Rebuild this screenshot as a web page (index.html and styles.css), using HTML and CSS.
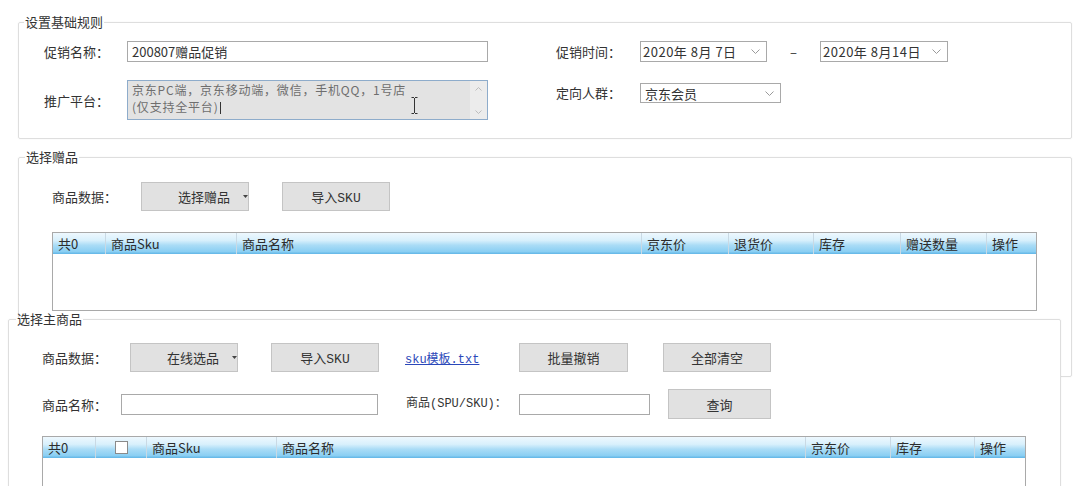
FILE: index.html
```html
<!DOCTYPE html>
<html lang="zh-CN">
<head>
    <meta charset="UTF-8">
    <meta name="viewport" content="width=device-width, initial-scale=1.0">
    <title>赠品促销</title>

    <link rel="stylesheet" href="styles.css">
</head>
<body>

    <fieldset class="group group-rules">
        <legend>设置基础规则</legend>
        <div class="rules">
            <label class="label">促销名称：</label>
            <div class="textbox name-box">200807赠品促销</div>

            <label class="label">促销时间：</label>
            <div class="date-range">
                <div class="picker date-picker">
                    <span class="date-text">2020年 8月 7日</span>
                    <svg class="chevron" width="9" height="5" viewBox="0 0 9 5"><path d="M0.5 0.5 L4.5 4.5 L8.5 0.5" fill="none" stroke="#9a9a9a" stroke-width="1"/></svg>
                </div>
                <span class="dash">–</span>
                <div class="picker date-picker">
                    <span class="date-text">2020年 8月14日</span>
                    <svg class="chevron" width="9" height="5" viewBox="0 0 9 5"><path d="M0.5 0.5 L4.5 4.5 L8.5 0.5" fill="none" stroke="#9a9a9a" stroke-width="1"/></svg>
                </div>
            </div>

            <label class="label">推广平台：</label>
            <div class="memo">
                <div class="memo-text">京东PC端，京东移动端，微信，手机QQ，1号店<br>(仅支持全平台)<span class="caret"></span></div>
                <div class="memo-scroll">
                    <svg width="7" height="4" viewBox="0 0 7 4"><path d="M0.5 3.5 L3.5 0.5 L6.5 3.5" fill="none" stroke="#bdbdbd"/></svg>
                    <svg width="7" height="4" viewBox="0 0 7 4"><path d="M0.5 0.5 L3.5 3.5 L6.5 0.5" fill="none" stroke="#bdbdbd"/></svg>
                </div>
                <!-- mouse pointer caught in the screenshot -->
                <svg class="ibeam" width="7" height="17" viewBox="0 0 7 17"><path d="M0.5 0.5 H3 M4 0.5 H6.5 M3.5 1 V16 M0.5 16.5 H3 M4 16.5 H6.5" fill="none" stroke="#333" stroke-width="1"/></svg>
            </div>

            <label class="label label-crowd">定向人群：</label>
            <div class="picker crowd-picker">
                <span>京东会员</span>
                <svg class="chevron" width="9" height="5" viewBox="0 0 9 5"><path d="M0.5 0.5 L4.5 4.5 L8.5 0.5" fill="none" stroke="#9a9a9a" stroke-width="1"/></svg>
            </div>
        </div>
    </fieldset>

    <fieldset class="group group-gift">
        <legend>选择赠品</legend>
        <div class="gift-body">
            <div class="toolbar">
                <span class="label gift-label">商品数据：</span>
                <div class="btn btn-drop">选择赠品
                    <svg width="5" height="3" viewBox="0 0 5 3"><path d="M0 0 H5 L2.5 3 Z" fill="#444"/></svg>
                </div>
                <div class="btn mono gift-import">导入SKU</div>
            </div>

            <div class="grid-table gift-table">
                <div class="grid-head">
                    <span>共0</span>
                    <span>商品Sku</span>
                    <span>商品名称</span>
                    <span>京东价</span>
                    <span>退货价</span>
                    <span>库存</span>
                    <span>赠送数量</span>
                    <span>操作</span>
                </div>
                <div class="grid-body"></div>
            </div>
        </div>
    </fieldset>

    <fieldset class="group group-main">
        <legend>选择主商品</legend>
        <div class="main-body">
            <div class="toolbar">
                <span class="label main-label">商品数据：</span>
                <div class="btn btn-drop">在线选品
                    <svg width="5" height="3" viewBox="0 0 5 3"><path d="M0 0 H5 L2.5 3 Z" fill="#444"/></svg>
                </div>
                <div class="btn mono main-import">导入SKU</div>
                <a class="link" href="#">sku模板.txt</a>
                <div class="btn btn-revoke">批量撤销</div>
                <div class="btn btn-clear">全部清空</div>
            </div>

            <div class="search-row">
                <span class="label name-label">商品名称：</span>
                <div class="textbox search-name"></div>
                <span class="label mono spu-label">商品(SPU/SKU)：</span>
                <div class="textbox search-spu"></div>
                <div class="btn btn-query">查询</div>
            </div>

            <div class="grid-table main-table">
                <div class="grid-head">
                    <span>共0</span>
                    <span class="check-cell"><i class="check"></i></span>
                    <span>商品Sku</span>
                    <span>商品名称</span>
                    <span>京东价</span>
                    <span>库存</span>
                    <span>操作</span>
                </div>
                <div class="grid-body"></div>
            </div>
        </div>
    </fieldset>

</body>
</html>
```

FILE: styles.css
```css
html, body {
    margin: 0;
    padding: 0;
    overflow: hidden;
    background-color: #fff;
}

body {
    width: 1080px;
    height: 486px;
    font-family: "Noto Sans CJK SC", "Noto Sans", sans-serif;
    font-size: 13px;
    color: #333;
}

.mono {
    font-family: "Liberation Mono", "Noto Sans CJK SC", monospace;
}

/* group boxes */
.group {
    border: 1px solid #dedede;
    border-radius: 2px;
    box-shadow: 0 0 2px rgba(0, 0, 0, 0.06);
    padding: 0;
    min-width: 0;
    background-color: #fff;
}

.group legend {
    font-size: 13px;
    line-height: 16px;
    padding: 0 1px;
    color: #333;
}

.group-rules {
    margin: 14px 8px 0 18px;
}

.group-rules legend {
    margin-left: 5px;
}

.group-gift {
    margin: 10px 8px 0 18px;
}

.group-gift legend {
    margin-left: 6px;
}

.group-main {
    position: relative; /* drawn over the gift box */
    margin: -66px 19px 0 8px;
}

.group-main legend {
    margin-left: 7px;
}

.label {
    white-space: nowrap;
    line-height: 21px;
}

/* base rules */
.rules {
    display: grid;
    grid-template-columns: 83px 429px 84px 1fr;
    grid-template-rows: 21px 40px;
    row-gap: 18px;
    align-items: center;
    padding: 11px 0 18px 25px;
}

.textbox {
    box-sizing: border-box;
    height: 21px;
    border: 1px solid #a9a9a9;
    background-color: #fff;
    padding: 0 4px;
    line-height: 19px;
    white-space: nowrap;
}

.name-box {
    width: 361px;
}

.date-range {
    display: flex;
    align-items: center;
}

.picker {
    box-sizing: border-box;
    display: flex;
    align-items: center;
    justify-content: space-between;
    height: 21px;
    border: 1px solid #a9a9a9;
    background-color: #fff;
    padding: 0 6px 0 2px;
    line-height: 19px;
    white-space: nowrap;
}

.date-picker {
    width: 127px;
}

.date-text {
    letter-spacing: 0.5px;
}

.date-range .date-picker:last-child {
    width: 128px;
}

.dash {
    width: 53px;
    text-align: center;
}

.memo {
    position: relative;
    box-sizing: border-box;
    display: flex;
    width: 361px;
    height: 40px;
    border: 1px solid #8eaccb;
    background-color: #e3e3e3;
}

.memo-text {
    flex: 1;
    padding: 0 4px;
    font-size: 12px;
    line-height: 17px;
    letter-spacing: 0.8px;
    color: #6e6e6e;
    white-space: nowrap;
}

.caret {
    display: inline-block;
    width: 1px;
    height: 12px;
    margin-left: 1px;
    background-color: #333;
    vertical-align: -2px;
}

.memo-scroll {
    width: 17px;
    display: flex;
    flex-direction: column;
    align-items: center;
    justify-content: space-between;
    padding: 6px 0 5px;
    background-color: #ececec;
}

.ibeam {
    position: absolute;
    left: 283px;
    top: 16px;
}

.label-crowd,
.crowd-picker {
    align-self: start;
    margin-top: 3px;
}

.label-crowd {
    line-height: 20px;
}

.crowd-picker {
    width: 141px;
    height: 20px;
    padding-left: 4px;
}

/* buttons */
.btn {
    box-sizing: border-box;
    display: flex;
    align-items: center;
    justify-content: center;
    width: 108px;
    height: 29px;
    border: 1px solid #c4c4c4;
    background-color: #e1e1e1;
    white-space: nowrap;
}

.btn-drop {
    justify-content: flex-start;
    padding-left: 36px;
    gap: 13px;
}

.toolbar {
    display: flex;
    align-items: center;
    height: 29px;
}

/* gift box */
.gift-body {
    padding: 17px 34px 65px 33px;
}

.gift-label {
    width: 89px;
}

.gift-import {
    margin-left: 33px;
}

/* tables */
.grid-table {
    box-sizing: border-box;
    margin-top: 21px;
    border: 1px solid #a9a9a9;
    background-color: #fff;
}

.grid-head {
    display: grid;
    height: 21px;
    background: linear-gradient(to bottom, #eef8fe 0%, #d8f0fc 35%, #aadcf6 58%, #8bcff3 88%, #5fb5e6 100%);
}

.grid-head span {
    padding-left: 5px;
    line-height: 21px;
    color: #2c2c2c;
    white-space: nowrap;
    border-left: 1px solid #c9d9e4;
}

.grid-head span:first-child {
    border-left: none;
}

.gift-table {
    width: 985px;
}

.gift-table .grid-head {
    grid-template-columns: 52px 131px 405px 87px 85px 87px 86px 1fr;
}

.gift-table .grid-body {
    height: 56px;
}

/* main product box */
.main-body {
    padding: 16px 33px 0 33px;
}

.main-label {
    width: 88px;
}

.main-import {
    margin-left: 33px;
}

.link {
    width: 114px;
    margin-left: 26px;
    font-family: "Liberation Mono", "Noto Sans CJK SC", monospace;
    font-size: 12px;
    color: #2b48b9;
    text-decoration: underline;
}

.btn-revoke {
    width: 109px;
}

.btn-clear {
    margin-left: 35px;
}

.search-row {
    display: flex;
    align-items: center;
    height: 30px;
    margin-top: 17px;
}

.name-label {
    width: 79px;
}

.search-name {
    width: 257px;
}

.spu-label {
    width: 113px;
    margin-left: 28px;
    font-size: 12px;
}

.search-spu {
    width: 131px;
}

.btn-query {
    width: 103px;
    height: 30px;
    margin-left: 18px;
}

.main-table {
    width: 984px;
    margin-top: 17px;
}

.main-table .grid-head {
    grid-template-columns: 52px 51px 130px 529px 85px 84px 1fr;
}

.main-table .grid-body {
    height: 80px;
}

.check-cell {
    display: flex;
    align-items: center;
    justify-content: center;
    padding-left: 0 !important;
}

.check {
    box-sizing: border-box;
    width: 13px;
    height: 13px;
    border: 1px solid #8a8a8a;
    background-color: #fff;
}
```
